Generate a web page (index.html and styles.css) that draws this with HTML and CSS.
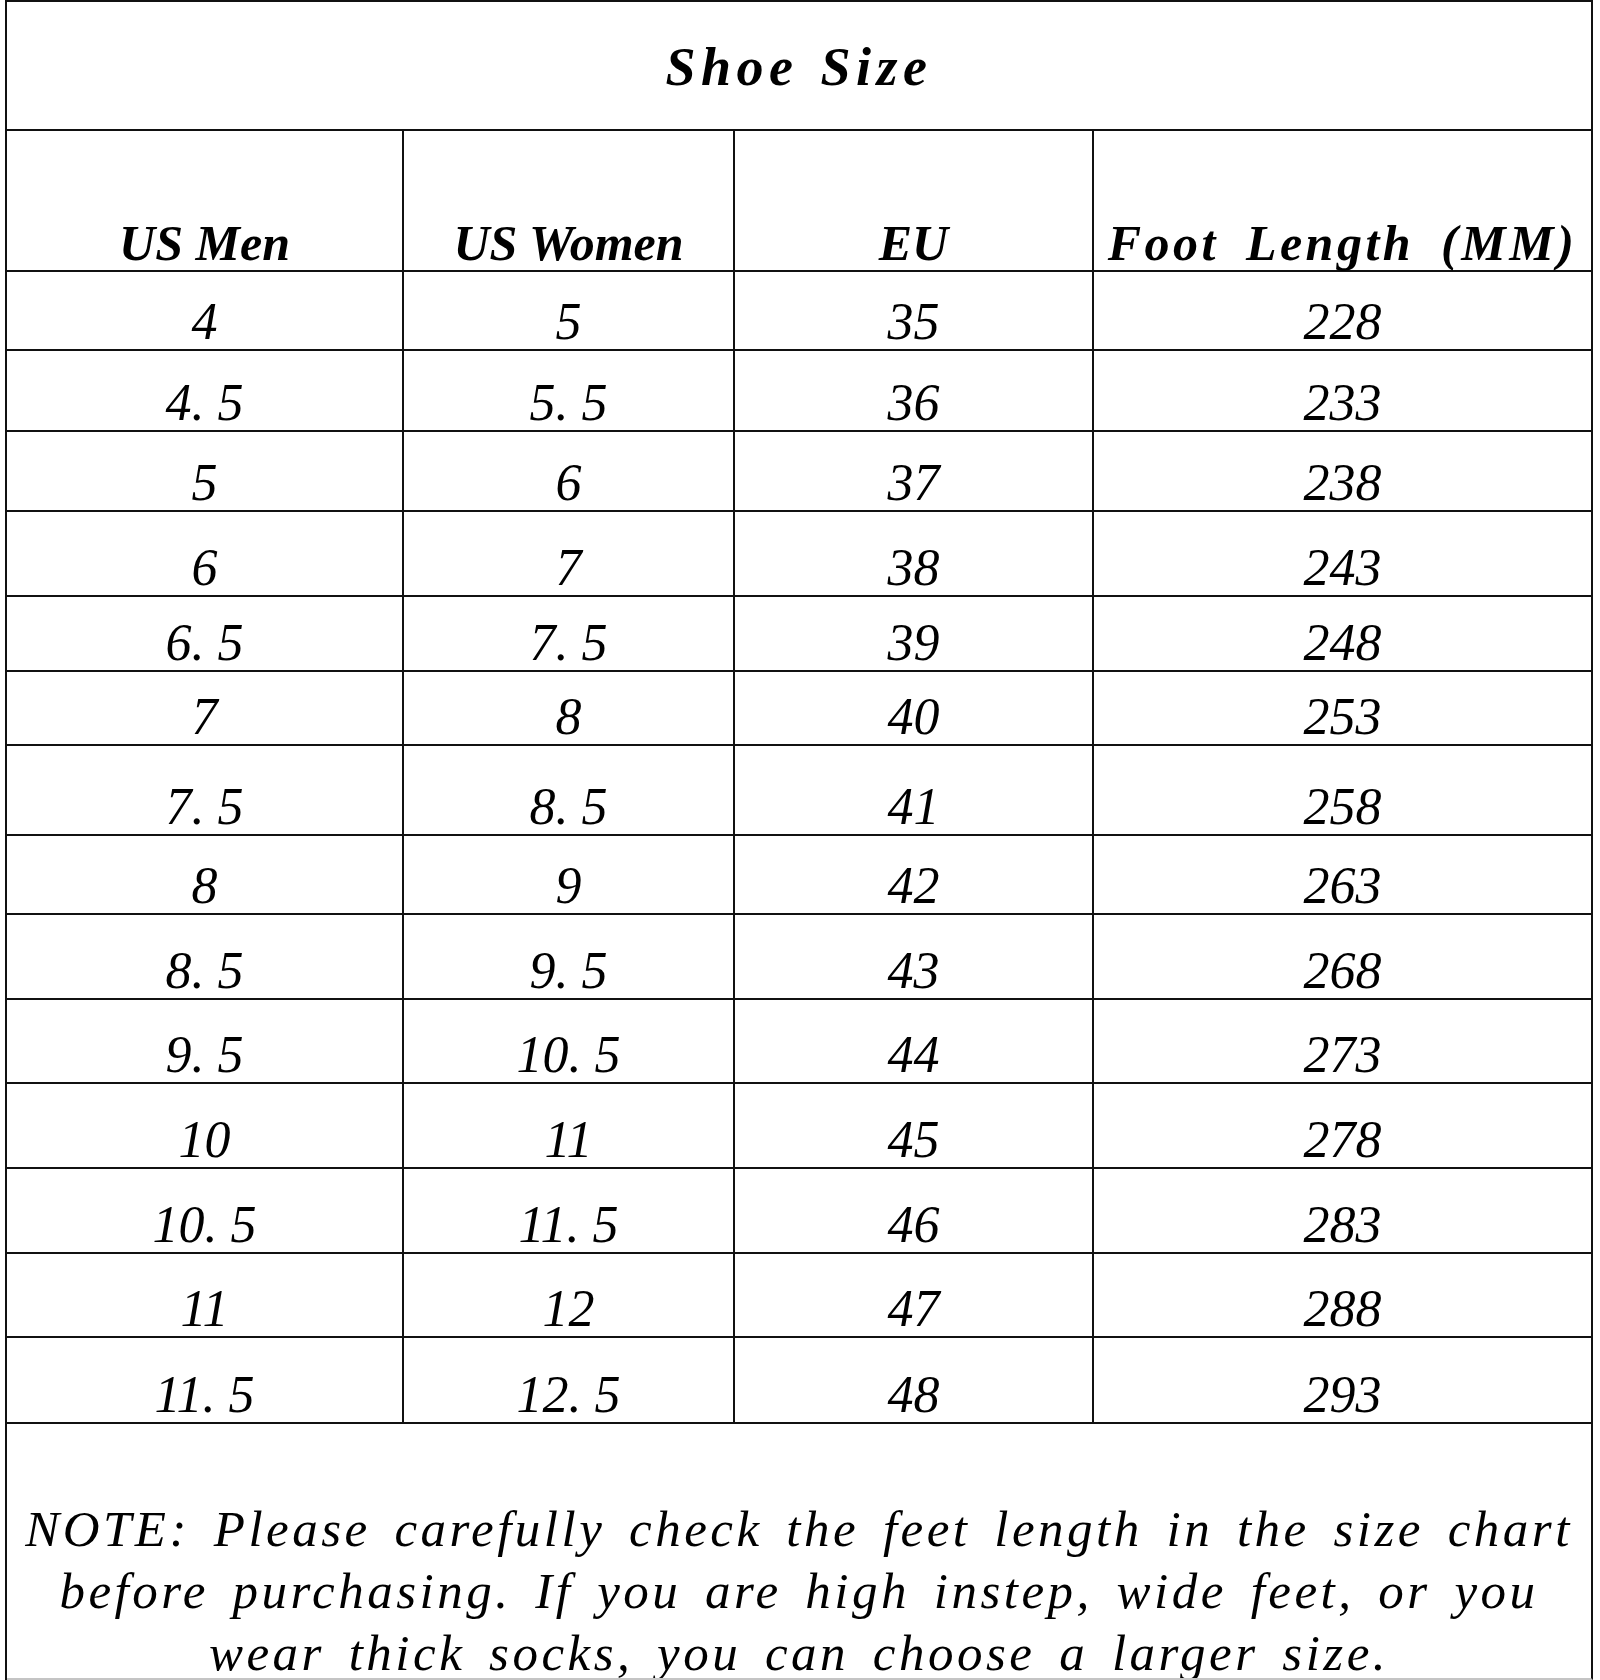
FILE: index.html
```html
<!DOCTYPE html>
<html lang="en">
<head>
<meta charset="utf-8">
<title>Shoe Size</title>
<link rel="stylesheet" href="styles.css">
</head>
<body>
<div class="chart">
  <div class="cell title"><span>Shoe Size</span></div>

  <div class="cell head"><span>US Men</span></div>
  <div class="cell head"><span>US Women</span></div>
  <div class="cell head"><span>EU</span></div>
  <div class="cell head wide"><span>Foot Length (MM)</span></div>

  <div class="cell num">4</div><div class="cell num">5</div><div class="cell num">35</div><div class="cell num">228</div>
  <div class="cell num">4. 5</div><div class="cell num">5. 5</div><div class="cell num">36</div><div class="cell num">233</div>
  <div class="cell num">5</div><div class="cell num">6</div><div class="cell num">37</div><div class="cell num">238</div>
  <div class="cell num">6</div><div class="cell num">7</div><div class="cell num">38</div><div class="cell num">243</div>
  <div class="cell num">6. 5</div><div class="cell num">7. 5</div><div class="cell num">39</div><div class="cell num">248</div>
  <div class="cell num">7</div><div class="cell num">8</div><div class="cell num">40</div><div class="cell num">253</div>
  <div class="cell num">7. 5</div><div class="cell num">8. 5</div><div class="cell num">41</div><div class="cell num">258</div>
  <div class="cell num">8</div><div class="cell num">9</div><div class="cell num">42</div><div class="cell num">263</div>
  <div class="cell num">8. 5</div><div class="cell num">9. 5</div><div class="cell num">43</div><div class="cell num">268</div>
  <div class="cell num">9. 5</div><div class="cell num">10. 5</div><div class="cell num">44</div><div class="cell num">273</div>
  <div class="cell num">10</div><div class="cell num">11</div><div class="cell num">45</div><div class="cell num">278</div>
  <div class="cell num">10. 5</div><div class="cell num">11. 5</div><div class="cell num">46</div><div class="cell num">283</div>
  <div class="cell num">11</div><div class="cell num">12</div><div class="cell num">47</div><div class="cell num">288</div>
  <div class="cell num">11. 5</div><div class="cell num">12. 5</div><div class="cell num">48</div><div class="cell num">293</div>

  <div class="cell note">
    <p>NOTE: Please carefully check the feet length in the size chart<br>before purchasing. If you are high instep, wide feet, or you<br>wear thick socks, you can choose a larger size.</p>
  </div>
</div>
</body>
</html>
```

FILE: styles.css
```css
html, body {
  margin: 0;
  padding: 0;
  background: #ffffff;
  overflow: hidden;
}

body {
  width: 1600px;
  height: 1680px;
  font-family: "Liberation Serif", "Times New Roman", serif;
  color: #000;
}

.chart {
  display: grid;
  grid-template-columns: 397px 331px 359px 499px;
  grid-template-rows: 129px 141px 79px 81px 80px 85px 75px 74px 90px 79px 85px 84px 85px 85px 84px 86px 256px;
  margin-left: 5px;
  width: max-content;
  border-left: 2px solid #111;
  border-top: 2px solid #111;
}

.cell {
  box-sizing: border-box;
  border-right: 2px solid #111;
  border-bottom: 2px solid #111;
  display: flex;
  justify-content: center;
  align-items: flex-end;
  white-space: nowrap;
}

.title {
  grid-column: 1 / -1;
  align-items: center;
  padding-top: 3px;
  font-size: 54px;
  line-height: 1;
  font-weight: bold;
  font-style: italic;
  letter-spacing: 5.5px;
  word-spacing: 3px;
}

.head {
  font-size: 50px;
  line-height: 1;
  font-weight: bold;
  font-style: italic;
  padding-bottom: 2px;
}

.head.wide {
  letter-spacing: 3.5px;
  word-spacing: 11px;
}

.num {
  font-size: 52px;
  line-height: 1;
  font-style: italic;
  padding-bottom: 1px;
}

.note {
  grid-column: 1 / -1;
  border-bottom-color: #c4c4c4;
  overflow: hidden;
}

.note p {
  margin: 0 0 -6px 0;
  font-size: 51px;
  line-height: 62px;
  font-style: italic;
  text-align: center;
  letter-spacing: 3.5px;
  word-spacing: 7.5px;
}
```
